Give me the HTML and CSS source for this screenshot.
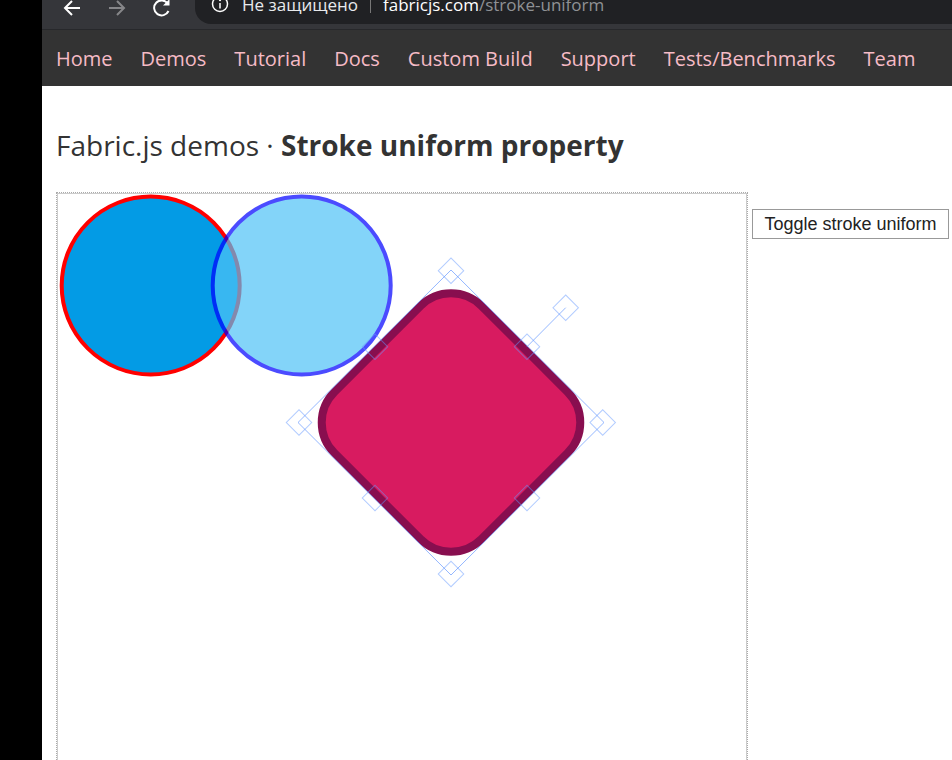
FILE: index.html
```html
<!DOCTYPE html>
<html lang="ru">

<head>
    <meta charset="UTF-8">
    <meta name="viewport" content="width=device-width, initial-scale=1.0">
    <title>Stroke uniform property</title>
    <link rel="stylesheet" href="styles.css">
</head>

<body>
    <div class="page">
        <div class="toolbar">
            <svg class="tool-icon" viewBox="0 0 20 20">
                <path d="M18 10H3M10 3l-7 7 7 7" />
            </svg>
            <svg class="tool-icon tool-off" viewBox="0 0 20 20">
                <path d="M2 10h15M10 3l7 7-7 7" />
            </svg>
            <svg class="tool-icon" viewBox="0 0 20 20">
                <path d="M16.5 13a7.5 7.5 0 1 1-.8-7.5" />
                <path class="tool-solid" d="M17.5 1v6.500h-6.500z" />
            </svg>
            <div class="address">
                <svg class="info-icon" viewBox="0 0 18 18">
                    <circle cx="9" cy="9" r="7.500" />
                    <path d="M9 8v5.500" />
                    <circle class="tool-solid" cx="9" cy="5.200" r="1.100" />
                </svg>
                <span class="secure">Не защищено</span>
                <span class="sep"></span>
                <span class="host">fabricjs.com</span><span class="path">/stroke-uniform</span>
            </div>
        </div>

        <nav class="nav">
            <a href="#">Home</a>
            <a href="#">Demos</a>
            <a href="#">Tutorial</a>
            <a href="#">Docs</a>
            <a href="#">Custom Build</a>
            <a href="#">Support</a>
            <a href="#">Tests/Benchmarks</a>
            <a href="#">Team</a>
        </nav>

        <main class="content">
            <h1 class="title">Fabric.js demos · <strong>Stroke uniform property</strong></h1>
            <div class="demo">
                <div class="canvas-wrap">
                    <svg class="canvas" width="688" height="600" viewBox="58 194 688 600">
                        <circle class="circle-red" cx="150.700" cy="285.500" r="89" />
                        <circle class="circle-blue" cx="301.700" cy="285.500" r="89" />

                        <rect class="rect-pink" x="-104" y="-104" width="208" height="208" rx="43"
                            transform="translate(451 422.500) rotate(45)" />

                        <path class="sel-line" d="M451 270L604 422.500L451 575L298 422.500Z" />
                        <path class="sel-line" d="M527 346.700L565.700 307.700" />

                        <rect class="handle" x="-9" y="-9" width="18" height="18" transform="translate(451 270.700) rotate(45)" />
                        <rect class="handle" x="-9" y="-9" width="18" height="18" transform="translate(299 422.500) rotate(45)" />
                        <rect class="handle" x="-9" y="-9" width="18" height="18" transform="translate(602.700 422.500) rotate(45)" />
                        <rect class="handle" x="-9" y="-9" width="18" height="18" transform="translate(451 574) rotate(45)" />
                        <rect class="handle" x="-9" y="-9" width="18" height="18" transform="translate(375 346.700) rotate(45)" />
                        <rect class="handle" x="-9" y="-9" width="18" height="18" transform="translate(527 346.700) rotate(45)" />
                        <rect class="handle" x="-9" y="-9" width="18" height="18" transform="translate(375 498) rotate(45)" />
                        <rect class="handle" x="-9" y="-9" width="18" height="18" transform="translate(527 498) rotate(45)" />
                        <rect class="handle" x="-9" y="-9" width="18" height="18" transform="translate(565.700 307.700) rotate(45)" />
                    </svg>
                </div>
                <button class="btn">Toggle stroke uniform</button>
            </div>
        </main>
    </div>
</body>

</html>
```

FILE: styles.css
```css
html,
body {
    margin: 0;
    height: 760px;
    overflow: hidden;
    background-color: #000;
}

.page {
    margin-left: 42px;
    width: 910px;
    height: 760px;
    overflow: hidden;
    background-color: #fff;
    font-family: "Open Sans", sans-serif;
}

.toolbar {
    display: flex;
    align-items: flex-end;
    height: 30px;
    box-sizing: border-box;
    padding-left: 20px;
    background-color: #35363a;
    border-bottom: 1px solid #27282b;
    overflow: hidden;
}

.tool-icon {
    width: 20px;
    height: 20px;
    margin: 0 25px 11px 0;
    flex: none;
    fill: none;
    stroke: #fff;
    stroke-width: 2;
}

.tool-off {
    opacity: 0.4;
}

.tool-solid {
    fill: #fff;
    stroke: none;
}

.address {
    display: flex;
    align-items: center;
    flex: none;
    width: 800px;
    height: 40px;
    margin: 0 0 5px -2px;
    padding-left: 16px;
    border-radius: 16px;
    background-color: #202124;
    font-size: 17px;
    color: #e8eaed;
}

.info-icon {
    width: 18px;
    height: 18px;
    margin-right: 13px;
    fill: none;
    stroke: #fff;
    stroke-width: 1.500;
}

.sep {
    width: 1px;
    height: 18px;
    margin: 0 12px;
    background-color: #777;
}

.host {
    color: #fff;
}

.path {
    color: #8f9195;
}

.nav {
    display: flex;
    align-items: center;
    gap: 28px;
    height: 56px;
    padding-left: 14px;
    background-color: #333;
    white-space: nowrap;
}

.nav a {
    color: #f6bbc6;
    font-size: 20px;
    text-decoration: none;
}

.content {
    padding: 0 0 0 14px;
}

.title {
    margin: 0;
    padding: 39px 0 27px;
    color: #333;
    font-size: 28px;
    font-weight: 400;
    line-height: 40px;
    white-space: nowrap;
}

.demo {
    display: flex;
    align-items: flex-start;
}

.canvas-wrap {
    flex: none;
    padding: 1px;
    border: 1px dotted #aaa;
    height: 600px;
}

.canvas {
    display: block;
    border-left: 1px solid #ccc;
    border-top: 1px solid #ccc;
    border-right: 1px solid #ccc;
    margin: -1px;
    box-sizing: content-box;
}

.circle-red {
    fill: #039be5;
    stroke: #f00;
    stroke-width: 4;
}

.circle-blue {
    fill: #4fc3f7;
    stroke: #00f;
    stroke-width: 4;
    opacity: 0.7;
}

.rect-pink {
    fill: #d81b60;
    stroke: #880e4f;
    stroke-width: 8;
}

.sel-line {
    fill: none;
    stroke: rgb(102 153 255 / 70%);
    stroke-width: 1;
}

.handle {
    fill: none;
    stroke: rgb(102 153 255 / 50%);
    stroke-width: 1;
}

.btn {
    flex: none;
    width: 197px;
    height: 30px;
    margin: 17px 0 0 4px;
    padding: 0;
    background-color: #fff;
    border: 1px solid #999;
    color: #222;
    font-family: "Liberation Sans", sans-serif;
    font-size: 18px;
}
```
